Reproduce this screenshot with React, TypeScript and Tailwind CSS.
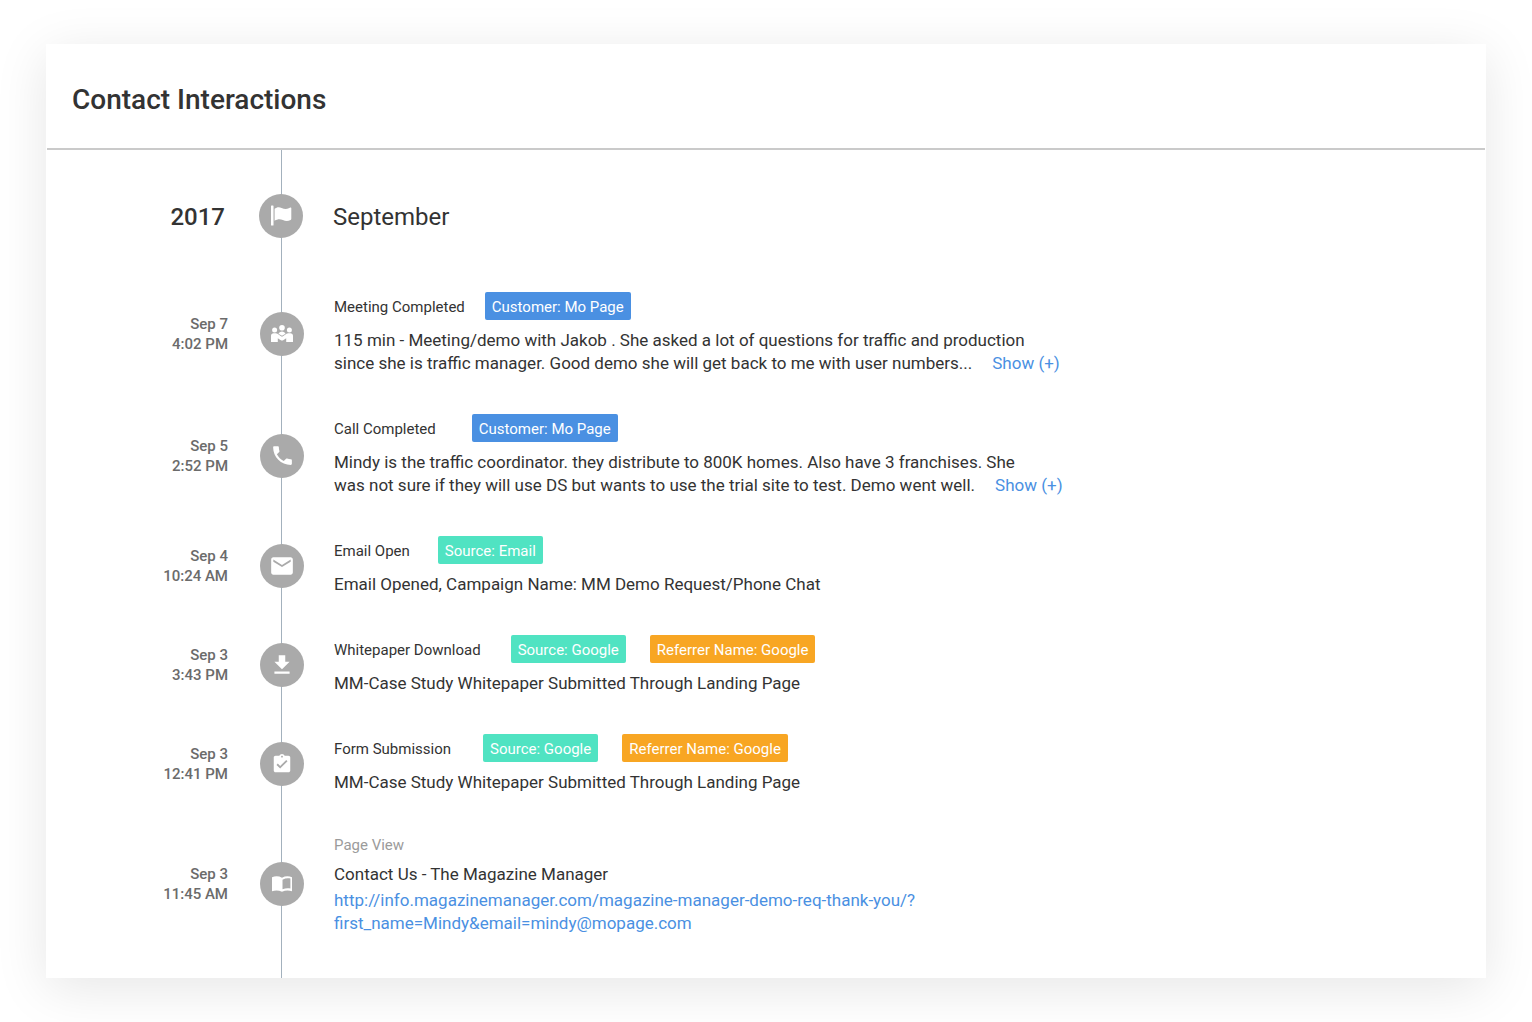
import type { ReactNode } from "react";
import { MdPhone, MdEmail, MdFileDownload, MdAssignmentTurnedIn } from "react-icons/md";

type Tone = "blue" | "teal" | "orange";
type Chip = { text: string; tone: Tone };
type Entry = {
  day: string;
  time: string;
  icon: ReactNode;
  title: string;
  chipGap: string;
  chips: Chip[];
  lines: string[];
  expandable?: boolean;
};

const tones: Record<Tone, string> = {
  blue: "bg-[#4a90e2]",
  teal: "bg-[#50e3c2]",
  orange: "bg-[#f8a623]",
};

function FlagIcon() {
  return (
    <svg width="22" height="22" viewBox="0 0 22 22" fill="currentColor" aria-hidden="true">
      <rect x="1" y="0.500" width="2.500" height="20" rx="0.6" />
      <path d="M4.600 3.800C6.600 2.100 9 1.700 11.600 2.900c2.600 1.200 4.800 1.300 7.200.4l1.500-.8c.5-.3 1 0 1 .5v10.800c0 .6-.2.9-.7 1.200-2.600 1.300-5 1.300-7.700.1-2.900-1.300-5.300-1.100-8.300.7z" />
    </svg>
  );
}

function MeetingIcon() {
  return (
    <svg width="24" height="20" viewBox="0 0 24 20" fill="currentColor" aria-hidden="true">
      <circle cx="12" cy="3.700" r="2.800" />
      <circle cx="4.600" cy="6" r="2.500" />
      <circle cx="19.400" cy="6" r="2.500" />
      <path d="M8.500 9.800c.4-1.500 1.800-2.400 3.500-2.400s3.100.9 3.500 2.400L12 11.700z" />
      <path d="M1 18v-6.200c0-1.600 1.100-2.500 2.600-2.500h2.200c.7 0 1.200.2 1.700.5l3.900 2.700c.4.2.8.2 1.200 0l3.900-2.700c.5-.3 1-.5 1.700-.5h2.200c1.500 0 2.600.9 2.600 2.500V18h-6.800v-3.700l-3 1.900c-.8.500-1.600.5-2.400 0l-3-1.900V18z" />
    </svg>
  );
}

function BookIcon() {
  return (
    <svg width="22" height="18" viewBox="0 0 22 18" fill="currentColor" aria-hidden="true">
      <path
        fillRule="evenodd"
        d="M1 2.200C4.300.8 7.800.9 11 2.700 14.200.9 17.700.8 21 2.200v14c-3.300-1.200-6.800-1.100-10 .6-3.200-1.700-6.700-1.800-10-.6zM11.500 4.700v9.600c2.600-1 5.200-1.300 7.900-.7V3.500c-2.700-.6-5.300-.2-7.900 1.200z"
      />
    </svg>
  );
}

const entries: Entry[] = [
  {
    day: "Sep 7",
    time: "4:02 PM",
    icon: <MeetingIcon />,
    title: "Meeting Completed",
    chipGap: "gap-5",
    chips: [{ text: "Customer: Mo Page", tone: "blue" }],
    lines: [
      "115 min - Meeting/demo with Jakob . She asked a lot of questions for traffic and production",
      "since she is traffic manager. Good demo she will get back to me with user numbers...",
    ],
    expandable: true,
  },
  {
    day: "Sep 5",
    time: "2:52 PM",
    icon: <MdPhone size={25} />,
    title: "Call Completed",
    chipGap: "gap-9",
    chips: [{ text: "Customer: Mo Page", tone: "blue" }],
    lines: [
      "Mindy is the traffic coordinator. they distribute to 800K homes. Also have 3 franchises. She",
      "was not sure if they will use DS but wants to use the trial site to test. Demo went well.",
    ],
    expandable: true,
  },
  {
    day: "Sep 4",
    time: "10:24 AM",
    icon: <MdEmail size={26} />,
    title: "Email Open",
    chipGap: "gap-7",
    chips: [{ text: "Source: Email", tone: "teal" }],
    lines: ["Email Opened, Campaign Name: MM Demo Request/Phone Chat"],
  },
  {
    day: "Sep 3",
    time: "3:43 PM",
    icon: <MdFileDownload size={26} />,
    title: "Whitepaper Download",
    chipGap: "gap-[30px]",
    chips: [
      { text: "Source: Google", tone: "teal" },
      { text: "Referrer Name: Google", tone: "orange" },
    ],
    lines: ["MM-Case Study Whitepaper Submitted Through Landing Page"],
  },
  {
    day: "Sep 3",
    time: "12:41 PM",
    icon: <MdAssignmentTurnedIn size={22} />,
    title: "Form Submission",
    chipGap: "gap-8",
    chips: [
      { text: "Source: Google", tone: "teal" },
      { text: "Referrer Name: Google", tone: "orange" },
    ],
    lines: ["MM-Case Study Whitepaper Submitted Through Landing Page"],
  },
];

function Marker({ children }: { children: ReactNode }) {
  return (
    <span className="relative flex size-11 shrink-0 items-center justify-center rounded-full bg-[#aaaaaa] text-white">
      {children}
    </span>
  );
}

function Row({ day, time, icon, children }: { day: string; time: string; icon: ReactNode; children: ReactNode }) {
  return (
    <li className="flex items-center">
      <p className="mr-8 w-[182px] shrink-0 text-right text-[15px] leading-5 font-medium text-[#6b6b6b]">
        {day}
        <br />
        {time}
      </p>
      <Marker>{icon}</Marker>
      <div className="ml-[30px] min-w-0 flex-1 pr-6 text-[17px] leading-[23px]">{children}</div>
    </li>
  );
}

export default function App() {
  return (
    <main className="min-h-screen bg-white px-[46px] py-11 font-['Roboto',sans-serif] text-[#333333]">
      <section className="bg-white shadow-[0_10px_50px_rgba(0,0,0,0.1)]">
        <header className="mx-px border-b-2 border-[#cacaca] px-[25px] pt-[38px] pb-[30px]">
          <h1 className="text-[28px] leading-9 font-medium">Contact Interactions</h1>
        </header>

        <div className="relative pt-11 pb-[43px]">
          <div className="absolute inset-y-0 left-[235px] w-px bg-[#a3b1bd]" />

          <div className="mb-[54px] flex items-center">
            <p className="mr-[34px] w-[179px] shrink-0 pt-0.5 text-right text-2xl font-medium">2017</p>
            <Marker>
              <FlagIcon />
            </Marker>
            <h2 className="ml-[30px] pt-0.5 text-2xl">September</h2>
          </div>

          <ol className="flex flex-col gap-[39px]">
            {entries.map((e) => (
              <Row key={e.day + e.time} day={e.day} time={e.time} icon={e.icon}>
                <div className={`mb-[9px] flex items-center ${e.chipGap}`}>
                  <h3 className="pt-0.5 text-[15px]">{e.title}</h3>
                  <div className="flex gap-6">
                    {e.chips.map((c) => (
                      <span
                        key={c.text}
                        className={`rounded-xs px-[7px] pt-[3px] text-[15px] leading-[25px] text-white ${tones[c.tone]}`}
                      >
                        {c.text}
                      </span>
                    ))}
                  </div>
                </div>
                <p>
                  {e.lines.map((line, i) => (
                    <span key={line}>
                      {i > 0 && <br />}
                      {line}
                    </span>
                  ))}
                  {e.expandable && (
                    <button type="button" className="ml-5 cursor-pointer text-[#4a90e2]">
                      Show (+)
                    </button>
                  )}
                </p>
              </Row>
            ))}

            <Row day="Sep 3" time="11:45 AM" icon={<BookIcon />}>
              <h3 className="mb-1.5 text-[15px] leading-6 text-[#9b9b9b]">Page View</h3>
              <p className="mb-[3px]">Contact Us - The Magazine Manager</p>
              <a
                className="text-[#4a90e2]"
                href="http://info.magazinemanager.com/magazine-manager-demo-req-thank-you/?first_name=Mindy&email=mindy@mopage.com"
              >
                http://info.magazinemanager.com/magazine-manager-demo-req-thank-you/?
                <br />
                first_name=Mindy&amp;email=mindy@mopage.com
              </a>
            </Row>
          </ol>
        </div>
      </section>
    </main>
  );
}
